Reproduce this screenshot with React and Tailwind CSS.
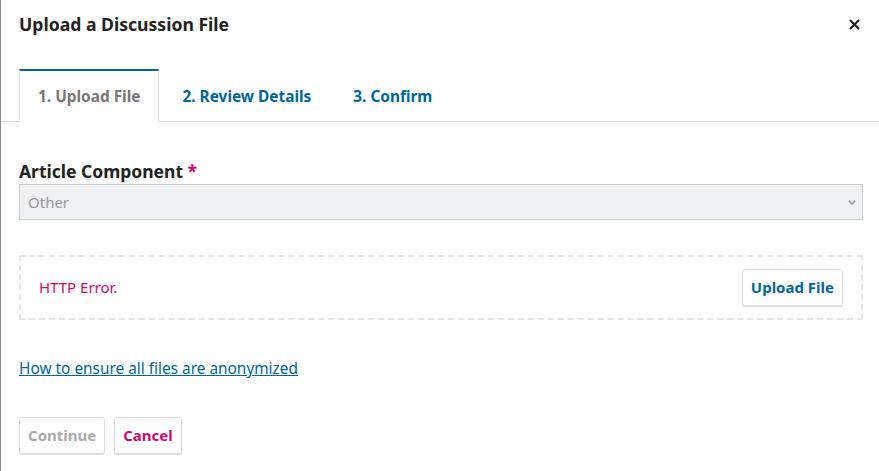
import React from "react";

export default function App() {
  return (
    <div
      className="w-[879px] h-[471px] bg-white border-l border-[#8a8a8a] overflow-hidden relative"
      style={{ fontFamily: '"Noto Sans", sans-serif' }}
    >
      {/* Header */}
      <div className="flex items-center justify-between pl-[18px] pr-[17px] pt-[3px] h-[46px]">
        <h1 className="text-[17.6px] font-bold text-[#222]">Upload a Discussion File</h1>
        <button className="w-4 h-4 flex items-center justify-center">
          <svg width="11" height="11" viewBox="0 0 11 11">
            <path d="M1 1 L10 10 M10 1 L1 10" stroke="#222" strokeWidth="2.2" />
          </svg>
        </button>
      </div>

      {/* Tabs */}
      <div className="mt-[23px] flex items-end gap-1 pl-[18px] border-b border-[#ddd] h-[53px]">
        <div className="h-[53px] -mb-px px-[18px] flex items-center bg-white border-t-2 border-t-[#006798] border-x border-x-[#ddd] text-[15.4px] font-bold text-[#777]">
          1. Upload File
        </div>
        <div className="h-[53px] -mb-px px-[19px] flex items-center border-t-2 border-transparent text-[15.4px] font-bold text-[#006798]">
          2. Review Details
        </div>
        <div className="h-[53px] -mb-px px-[19px] flex items-center border-t-2 border-transparent text-[15.4px] font-bold text-[#006798]">
          3. Confirm
        </div>
      </div>

      {/* Body */}
      <div className="pl-[18px] pr-[16px]">
        <div className="mt-[37px] text-[17.5px] font-bold text-[#222] leading-[24px]">
          Article Component <span className="text-[#d00a6c]">*</span>
        </div>
        <div className="mt-[1px] h-[36px] border border-[#ccc] bg-[#eff0f1] flex items-center justify-between pl-[8px] pr-[6px]">
          <span className="text-[15px] text-[#999]">Other</span>
          <svg width="8" height="5" viewBox="0 0 8 5">
            <path d="M0.8 0.8 L4 4 L7.2 0.8" stroke="#999" strokeWidth="1.6" fill="none" />
          </svg>
        </div>

        <div className="mt-[35px] h-[65px] border-2 border-dashed border-[#e3e5e7] flex items-center justify-between pl-[18px] pr-[18px]">
          <span className="text-[15px] text-[#d00a6c]">HTTP Error.</span>
          <button className="h-[37px] px-[8px] border border-[#ddd] rounded-[3px] shadow-[0_1px_0_#ddd] bg-white text-[15px] font-bold text-[#006798]">
            Upload File
          </button>
        </div>

        <a href="#" className="block mt-[37px] text-[15.4px] text-[#006798] underline w-fit">
          How to ensure all files are anonymized
        </a>

        <div className="mt-[37px] flex gap-[9px]">
          <button className="h-[37px] px-[8px] border border-[#ddd] rounded-[3px] shadow-[0_1px_0_#ddd] bg-white text-[15px] font-bold text-[#aaa]">
            Continue
          </button>
          <button className="h-[37px] px-[8px] border border-[#ddd] rounded-[3px] shadow-[0_1px_0_#ddd] bg-white text-[15px] font-bold text-[#d00a6c]">
            Cancel
          </button>
        </div>
      </div>
    </div>
  );
}
